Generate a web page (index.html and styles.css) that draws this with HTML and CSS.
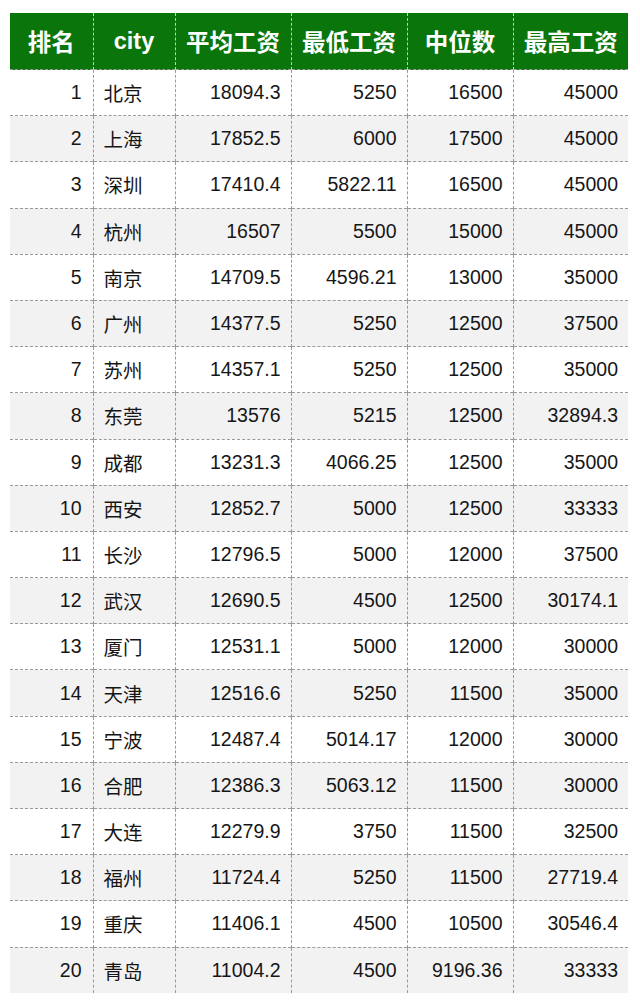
FILE: index.html
```html
<!DOCTYPE html>
<html lang="zh-CN">
<head>
<meta charset="utf-8">
<title>城市工资排名</title>
<link rel="stylesheet" href="styles.css">
</head>
<body>
<table class="salary">
<colgroup>
<col class="c1"><col class="c2"><col class="c3"><col class="c4"><col class="c5"><col class="c6">
</colgroup>
<thead>
<tr><th>排名</th><th>city</th><th>平均工资</th><th>最低工资</th><th>中位数</th><th>最高工资</th></tr>
</thead>
<tbody>
<tr><td>1</td><td class="city">北京</td><td>18094.3</td><td>5250</td><td>16500</td><td>45000</td></tr>
<tr><td>2</td><td class="city">上海</td><td>17852.5</td><td>6000</td><td>17500</td><td>45000</td></tr>
<tr><td>3</td><td class="city">深圳</td><td>17410.4</td><td>5822.11</td><td>16500</td><td>45000</td></tr>
<tr><td>4</td><td class="city">杭州</td><td>16507</td><td>5500</td><td>15000</td><td>45000</td></tr>
<tr><td>5</td><td class="city">南京</td><td>14709.5</td><td>4596.21</td><td>13000</td><td>35000</td></tr>
<tr><td>6</td><td class="city">广州</td><td>14377.5</td><td>5250</td><td>12500</td><td>37500</td></tr>
<tr><td>7</td><td class="city">苏州</td><td>14357.1</td><td>5250</td><td>12500</td><td>35000</td></tr>
<tr><td>8</td><td class="city">东莞</td><td>13576</td><td>5215</td><td>12500</td><td>32894.3</td></tr>
<tr><td>9</td><td class="city">成都</td><td>13231.3</td><td>4066.25</td><td>12500</td><td>35000</td></tr>
<tr><td>10</td><td class="city">西安</td><td>12852.7</td><td>5000</td><td>12500</td><td>33333</td></tr>
<tr><td>11</td><td class="city">长沙</td><td>12796.5</td><td>5000</td><td>12000</td><td>37500</td></tr>
<tr><td>12</td><td class="city">武汉</td><td>12690.5</td><td>4500</td><td>12500</td><td>30174.1</td></tr>
<tr><td>13</td><td class="city">厦门</td><td>12531.1</td><td>5000</td><td>12000</td><td>30000</td></tr>
<tr><td>14</td><td class="city">天津</td><td>12516.6</td><td>5250</td><td>11500</td><td>35000</td></tr>
<tr><td>15</td><td class="city">宁波</td><td>12487.4</td><td>5014.17</td><td>12000</td><td>30000</td></tr>
<tr><td>16</td><td class="city">合肥</td><td>12386.3</td><td>5063.12</td><td>11500</td><td>30000</td></tr>
<tr><td>17</td><td class="city">大连</td><td>12279.9</td><td>3750</td><td>11500</td><td>32500</td></tr>
<tr><td>18</td><td class="city">福州</td><td>11724.4</td><td>5250</td><td>11500</td><td>27719.4</td></tr>
<tr><td>19</td><td class="city">重庆</td><td>11406.1</td><td>4500</td><td>10500</td><td>30546.4</td></tr>
<tr><td>20</td><td class="city">青岛</td><td>11004.2</td><td>4500</td><td>9196.36</td><td>33333</td></tr>
</tbody>
</table>
</body>
</html>
```

FILE: styles.css
```css
html, body {
  margin: 0;
  padding: 0;
  background: #ffffff;
}

body {
  padding: 13px 12px 0 10px;
  font-family: "Liberation Sans", "Noto Sans CJK SC", sans-serif;
  color: #161616;
}

.salary {
  border-collapse: collapse;
  table-layout: fixed;
  width: 618px;
}

.c1 { width: 83px; }
.c2 { width: 82px; }
.c3 { width: 116px; }
.c4 { width: 116px; }
.c5 { width: 106px; }
.c6 { width: 115px; }

.salary th {
  height: 56px;
  padding: 0;
  background: #0a750a;
  color: #ffffff;
  font-size: 23.5px;
  font-weight: bold;
  text-align: center;
  border-right: 1px dashed #b9d3b9;
}

.salary th:last-child,
.salary td:last-child {
  border-right: none;
}

.salary td {
  height: 46.2px;
  padding: 0 10px 0 10px;
  font-size: 19.5px;
  text-align: right;
  border-right: 1px dashed #9a9a9a;
  border-top: 1px dashed #9a9a9a;
  box-sizing: border-box;
}

.salary td:first-child {
  padding-right: 11px;
}

.salary td.city {
  text-align: left;
}

.salary tbody tr:nth-child(even) td {
  background: #f3f2f3;
}
```
